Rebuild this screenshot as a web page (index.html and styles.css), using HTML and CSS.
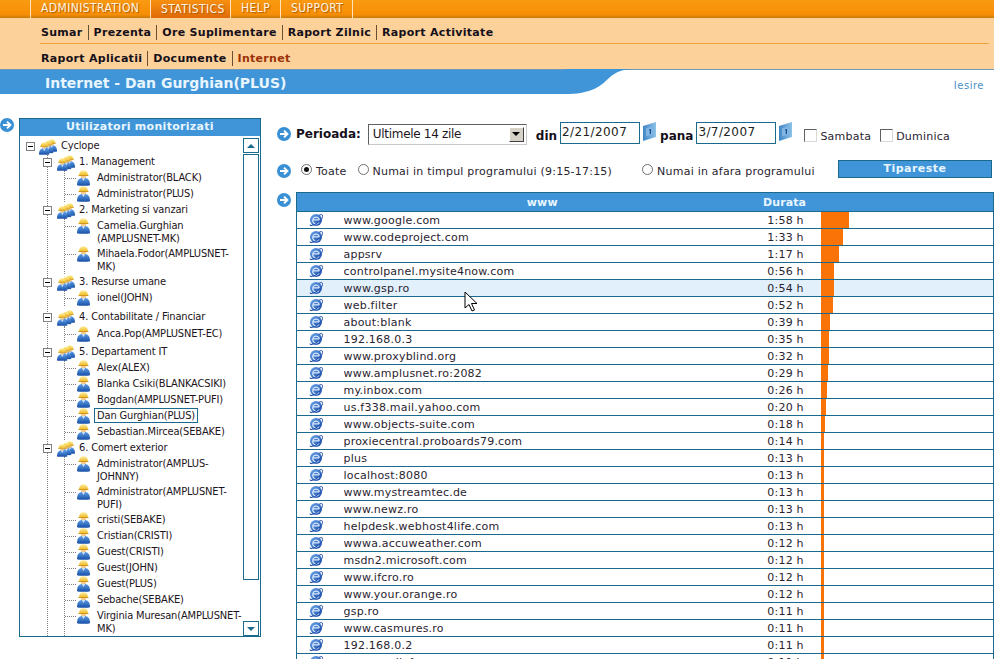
FILE: index.html
```html
<!DOCTYPE html>
<html lang="ro">
<head>
<meta charset="utf-8">
<title>Internet - Dan Gurghian(PLUS)</title>
<link rel="stylesheet" href="styles.css">
</head>
<body>
<svg class="defs" width="0" height="0" aria-hidden="true">
  <defs>
    <linearGradient id="ub" x1="0" y1="0" x2="0" y2="1"><stop offset="0" stop-color="#5f9fe6"/><stop offset="1" stop-color="#174ea6"/></linearGradient>
    <linearGradient id="uy" x1="0" y1="0" x2="0" y2="1"><stop offset="0" stop-color="#fff2a0"/><stop offset="1" stop-color="#f0bb28"/></linearGradient>
    <linearGradient id="ie" x1="0" y1="0" x2="1" y2="1"><stop offset="0" stop-color="#6aa6ea"/><stop offset="1" stop-color="#1a48a8"/></linearGradient>
    <linearGradient id="calg" x1="0" y1="0" x2="1" y2="0"><stop offset="0" stop-color="#3f86c4"/><stop offset="1" stop-color="#8ec2e8"/></linearGradient>
    <symbol id="user" viewBox="0 0 13 16">
      <path d="M0 15.300C0 10 2.200 7.800 6.500 7.800S13 10 13 15.300c-2 .7-11 .7-13 0z" fill="url(#ub)"/>
      <path d="M4.800 8h3.400L6.500 11z" fill="#cfe3fa"/>
      <path d="M3.800 5.500h5.400v1.700c-.8 1.300-4.600 1.300-5.400 0z" fill="#f3c98e"/>
      <path d="M2 5.200C2 2.100 4 .2 6.500.2S11 2.100 11 5.200z" fill="url(#uy)"/>
      <path d="M1.500 5.500h10" stroke="#cf9a1c" stroke-width="1"/>
    </symbol>
    <symbol id="arrow" viewBox="0 0 14 14">
      <circle cx="7" cy="7" r="7" fill="#3a90d4"/>
      <path d="M3 7h7M7 3.600 10.400 7 7 10.400" fill="none" stroke="#fff" stroke-width="2"/>
    </symbol>
    <symbol id="group" viewBox="0 0 18 17">
      <use href="#user" x="7.500" y="1" width="10.500" height="13"/>
      <use href="#user" x="4" y="2.500" width="10.500" height="13"/>
      <use href="#user" x="0" y="4" width="10.500" height="13"/>
    </symbol>
    <symbol id="ie-icon" viewBox="0 0 14 14">
      <circle cx="7" cy="7" r="6" fill="url(#ie)"/>
      <path d="M3.600 6.800h6.800M10 9.300A3.400 3.400 0 1 1 10.400 6.800" fill="none" stroke="#d7e8fb" stroke-width="1.200"/>
      <path d="M1.200 11.500C.3 13.500 4 12.800 8 10.200s6.500-6.400 5.500-8C13 1.300 11.500 1.500 10 2.300" fill="none" stroke="#1f4fa8" stroke-width="1"/>
    </symbol>
    <symbol id="cal" viewBox="0 0 14 20">
      <path d="M0 4 13 0v15L0 19z" fill="url(#calg)"/>
      <path d="M3 6.500 10.500 4v8L3 14.500z" fill="#7fb6e4"/>
      <path d="M6 7.500 8 7v5H6.800V8.300l-.8.200z" fill="#174f86"/>
    </symbol>
    <symbol id="minus" viewBox="0 0 9 9">
      <rect x=".5" y=".5" width="8" height="8" fill="#fff" stroke="#808080"/>
      <path d="M2 4.500h5" stroke="#000"/>
    </symbol>
  </defs>
</svg>

<header class="top">
  <nav class="tabs">
    <a class="tab">ADMINISTRATION</a>
    <a class="tab tab-active">STATISTICS</a>
    <a class="tab">HELP</a>
    <a class="tab">SUPPORT</a>
  </nav>
  <div class="subnav">
    <div class="subrow subrow-line">
      <a class="sub">Sumar</a><a class="sub">Prezenta</a><a class="sub">Ore Suplimentare</a><a class="sub">Raport Zilnic</a><a class="sub sub-last">Raport Activitate</a>
    </div>
    <div class="subrow">
      <a class="sub">Raport Aplicatii</a><a class="sub">Documente</a><a class="sub sub-last sub-current">Internet</a>
    </div>
  </div>
  <div class="banner">
    <h1 class="banner-title">Internet - Dan Gurghian(PLUS)</h1>
    <svg class="banner-curve" width="71" height="25" viewBox="0 0 71 25"><path d="M0 0H71C58 0 52 2 44 9 34 19 24 25 0 25z" fill="#3f95d7"/></svg>
    <a class="logout">Iesire</a>
  </div>
</header>

<main class="content">
  <aside class="side">
    <svg class="arrow side-arrow"><use href="#arrow"/></svg>
    <section class="panel">
      <h2 class="panel-title">Utilizatori monitorizati</h2>
      <div class="panel-body">
        <div class="tree">
          <div class="n n0"><svg class="minus"><use href="#minus"/></svg><svg class="group"><use href="#group"/></svg><span>Cyclope</span></div>
          <div class="branch b0">
            <div class="n n1"><svg class="minus"><use href="#minus"/></svg><svg class="group"><use href="#group"/></svg><span>1. Management</span></div>
            <div class="branch b1">
              <div class="n n2"><svg class="user"><use href="#user"/></svg><span>Administrator(BLACK)</span></div>
              <div class="n n2"><svg class="user"><use href="#user"/></svg><span>Administrator(PLUS)</span></div>
            </div>
            <div class="n n1"><svg class="minus"><use href="#minus"/></svg><svg class="group"><use href="#group"/></svg><span>2. Marketing si vanzari</span></div>
            <div class="branch b1">
              <div class="n n2"><svg class="user"><use href="#user"/></svg><span>Camelia.Gurghian<br>(AMPLUSNET-MK)</span></div>
              <div class="n n2"><svg class="user"><use href="#user"/></svg><span>Mihaela.Fodor(AMPLUSNET-<br>MK)</span></div>
            </div>
            <div class="n n1"><svg class="minus"><use href="#minus"/></svg><svg class="group"><use href="#group"/></svg><span>3. Resurse umane</span></div>
            <div class="branch b1">
              <div class="n n2"><svg class="user"><use href="#user"/></svg><span>ionel(JOHN)</span></div>
            </div>
            <div class="n n1 gap3"><svg class="minus"><use href="#minus"/></svg><svg class="group"><use href="#group"/></svg><span>4. Contabilitate / Financiar</span></div>
            <div class="branch b1 gap1">
              <div class="n n2"><svg class="user"><use href="#user"/></svg><span>Anca.Pop(AMPLUSNET-EC)</span></div>
            </div>
            <div class="n n1 gap2"><svg class="minus"><use href="#minus"/></svg><svg class="group"><use href="#group"/></svg><span>5. Departament IT</span></div>
            <div class="branch b1">
              <div class="n n2"><svg class="user"><use href="#user"/></svg><span>Alex(ALEX)</span></div>
              <div class="n n2"><svg class="user"><use href="#user"/></svg><span>Blanka Csiki(BLANKACSIKI)</span></div>
              <div class="n n2"><svg class="user"><use href="#user"/></svg><span>Bogdan(AMPLUSNET-PUFI)</span></div>
              <div class="n n2"><svg class="user"><use href="#user"/></svg><span class="selected">Dan Gurghian(PLUS)</span></div>
              <div class="n n2"><svg class="user"><use href="#user"/></svg><span>Sebastian.Mircea(SEBAKE)</span></div>
            </div>
            <div class="n n1"><svg class="minus"><use href="#minus"/></svg><svg class="group"><use href="#group"/></svg><span>6. Comert exterior</span></div>
            <div class="branch b1">
              <div class="n n2"><svg class="user"><use href="#user"/></svg><span>Administrator(AMPLUS-<br>JOHNNY)</span></div>
              <div class="n n2"><svg class="user"><use href="#user"/></svg><span>Administrator(AMPLUSNET-<br>PUFI)</span></div>
              <div class="n n2"><svg class="user"><use href="#user"/></svg><span>cristi(SEBAKE)</span></div>
              <div class="n n2"><svg class="user"><use href="#user"/></svg><span>Cristian(CRISTI)</span></div>
              <div class="n n2"><svg class="user"><use href="#user"/></svg><span>Guest(CRISTI)</span></div>
              <div class="n n2"><svg class="user"><use href="#user"/></svg><span>Guest(JOHN)</span></div>
              <div class="n n2"><svg class="user"><use href="#user"/></svg><span>Guest(PLUS)</span></div>
              <div class="n n2"><svg class="user"><use href="#user"/></svg><span>Sebache(SEBAKE)</span></div>
              <div class="n n2"><svg class="user"><use href="#user"/></svg><span>Virginia Muresan(AMPLUSNET-<br>MK)</span></div>
            </div>
            <div class="n n1"><svg class="minus"><use href="#minus"/></svg><svg class="group"><use href="#group"/></svg></div>
          </div>
        </div>
        <div class="scrollbar">
          <div class="sb-btn"><span class="tri tri-up"></span></div>
          <div class="sb-thumb"></div>
          <div class="sb-btn sb-btn-down"><span class="tri tri-down"></span></div>
        </div>
      </div>
    </section>
  </aside>

  <section class="report">
    <form class="filter filter-period">
      <svg class="arrow"><use href="#arrow"/></svg>
      <label class="strong lbl-period">Perioada:</label>
      <div class="select"><span class="select-value">Ultimele 14 zile</span><span class="select-btn"><span class="tri tri-down tri-dark"></span></span></div>
      <label class="strong lbl-din">din</label>
      <div class="date">2/21/2007</div>
      <svg class="cal"><use href="#cal"/></svg>
      <label class="strong lbl-pana">pana</label>
      <div class="date">3/7/2007</div>
      <svg class="cal"><use href="#cal"/></svg>
      <span class="check check-first"></span><span class="opt">Sambata</span>
      <span class="check check-second"></span><span class="opt">Duminica</span>
    </form>
    <form class="filter filter-time">
      <svg class="arrow"><use href="#arrow"/></svg>
      <span class="radio radio-on radio-a"></span><span class="opt opt-a">Toate</span>
      <span class="radio radio-b"></span><span class="opt opt-b">Numai in timpul programului (9:15-17:15)</span>
      <span class="radio radio-c"></span><span class="opt opt-c">Numai in afara programului</span>
      <span class="print">Tipareste</span>
    </form>
    <div class="table-row">
      <svg class="arrow table-arrow"><use href="#arrow"/></svg>
      <table class="grid">
        <colgroup><col class="c-ico"><col class="c-name"><col class="c-time"><col class="c-bar"></colgroup>
        <thead><tr><th colspan="2" class="th-www">www</th><th>Durata</th><th></th></tr></thead>
        <tbody>
          <tr><td><svg class="ie"><use href="#ie-icon"/></svg></td><td>www.google.com</td><td>1:58 h</td><td><div class="bar" style="width:28px"></div></td></tr>
          <tr><td><svg class="ie"><use href="#ie-icon"/></svg></td><td>www.codeproject.com</td><td>1:33 h</td><td><div class="bar" style="width:22px"></div></td></tr>
          <tr><td><svg class="ie"><use href="#ie-icon"/></svg></td><td>appsrv</td><td>1:17 h</td><td><div class="bar" style="width:18px"></div></td></tr>
          <tr><td><svg class="ie"><use href="#ie-icon"/></svg></td><td>controlpanel.mysite4now.com</td><td>0:56 h</td><td><div class="bar" style="width:13px"></div></td></tr>
          <tr class="hover"><td><svg class="ie"><use href="#ie-icon"/></svg></td><td>www.gsp.ro</td><td>0:54 h</td><td><div class="bar" style="width:13px"></div></td></tr>
          <tr><td><svg class="ie"><use href="#ie-icon"/></svg></td><td>web.filter</td><td>0:52 h</td><td><div class="bar" style="width:12px"></div></td></tr>
          <tr><td><svg class="ie"><use href="#ie-icon"/></svg></td><td>about:blank</td><td>0:39 h</td><td><div class="bar" style="width:9px"></div></td></tr>
          <tr><td><svg class="ie"><use href="#ie-icon"/></svg></td><td>192.168.0.3</td><td>0:35 h</td><td><div class="bar" style="width:8px"></div></td></tr>
          <tr><td><svg class="ie"><use href="#ie-icon"/></svg></td><td>www.proxyblind.org</td><td>0:32 h</td><td><div class="bar" style="width:8px"></div></td></tr>
          <tr><td><svg class="ie"><use href="#ie-icon"/></svg></td><td>www.amplusnet.ro:2082</td><td>0:29 h</td><td><div class="bar" style="width:7px"></div></td></tr>
          <tr><td><svg class="ie"><use href="#ie-icon"/></svg></td><td>my.inbox.com</td><td>0:26 h</td><td><div class="bar" style="width:6px"></div></td></tr>
          <tr><td><svg class="ie"><use href="#ie-icon"/></svg></td><td>us.f338.mail.yahoo.com</td><td>0:20 h</td><td><div class="bar" style="width:5px"></div></td></tr>
          <tr><td><svg class="ie"><use href="#ie-icon"/></svg></td><td>www.objects-suite.com</td><td>0:18 h</td><td><div class="bar" style="width:4px"></div></td></tr>
          <tr><td><svg class="ie"><use href="#ie-icon"/></svg></td><td>proxiecentral.proboards79.com</td><td>0:14 h</td><td><div class="bar" style="width:3px"></div></td></tr>
          <tr><td><svg class="ie"><use href="#ie-icon"/></svg></td><td>plus</td><td>0:13 h</td><td><div class="bar" style="width:3px"></div></td></tr>
          <tr><td><svg class="ie"><use href="#ie-icon"/></svg></td><td>localhost:8080</td><td>0:13 h</td><td><div class="bar" style="width:3px"></div></td></tr>
          <tr><td><svg class="ie"><use href="#ie-icon"/></svg></td><td>www.mystreamtec.de</td><td>0:13 h</td><td><div class="bar" style="width:3px"></div></td></tr>
          <tr><td><svg class="ie"><use href="#ie-icon"/></svg></td><td>www.newz.ro</td><td>0:13 h</td><td><div class="bar" style="width:3px"></div></td></tr>
          <tr><td><svg class="ie"><use href="#ie-icon"/></svg></td><td>helpdesk.webhost4life.com</td><td>0:13 h</td><td><div class="bar" style="width:3px"></div></td></tr>
          <tr><td><svg class="ie"><use href="#ie-icon"/></svg></td><td>wwwa.accuweather.com</td><td>0:12 h</td><td><div class="bar" style="width:3px"></div></td></tr>
          <tr><td><svg class="ie"><use href="#ie-icon"/></svg></td><td>msdn2.microsoft.com</td><td>0:12 h</td><td><div class="bar" style="width:3px"></div></td></tr>
          <tr><td><svg class="ie"><use href="#ie-icon"/></svg></td><td>www.ifcro.ro</td><td>0:12 h</td><td><div class="bar" style="width:3px"></div></td></tr>
          <tr><td><svg class="ie"><use href="#ie-icon"/></svg></td><td>www.your.orange.ro</td><td>0:12 h</td><td><div class="bar" style="width:3px"></div></td></tr>
          <tr><td><svg class="ie"><use href="#ie-icon"/></svg></td><td>gsp.ro</td><td>0:11 h</td><td><div class="bar" style="width:3px"></div></td></tr>
          <tr><td><svg class="ie"><use href="#ie-icon"/></svg></td><td>www.casmures.ro</td><td>0:11 h</td><td><div class="bar" style="width:3px"></div></td></tr>
          <tr><td><svg class="ie"><use href="#ie-icon"/></svg></td><td>192.168.0.2</td><td>0:11 h</td><td><div class="bar" style="width:3px"></div></td></tr>
          <tr><td><svg class="ie"><use href="#ie-icon"/></svg></td><td>www.mediafax.ro</td><td>0:11 h</td><td><div class="bar" style="width:3px"></div></td></tr>
        </tbody>
      </table>
    </div>
  </section>
</main>

<svg class="cursor" width="14" height="22" viewBox="0 0 14 22"><path d="M1 1v16l4-3.500 3 6.500 2.500-1-3-6.500h5.500z" fill="#fff" stroke="#000"/></svg>
</body>
</html>
```
FILE: styles.css
```css
* { box-sizing: border-box; }
html, body { height: 659px; overflow: hidden; }
body { margin: 0; background: #fff; color: #1c1420; font: 11px/13px "DejaVu Sans", Verdana, sans-serif; letter-spacing: .22px; position: relative; }
.defs { position: absolute; }
h1, h2 { margin: 0; }

.tabs { display: flex; height: 18px; padding-left: 30px; background: linear-gradient(#f99a12 0, #f78f06 80%, #c97a08 100%); }
.tab { border-left: 1px solid #fde3bd; padding: 2px 10px 0; color: #fff4e4; font: 12px/13px "DejaVu Sans Condensed", "Liberation Sans", sans-serif; letter-spacing: .4px; text-shadow: 1px 1px 1px #a85a00; }
.tab:nth-child(1) { width: 120px; }
.tab:nth-child(2) { width: 80px; padding-top: 3px; background: linear-gradient(#f79010, #e06a08); }
.tab:nth-child(3) { width: 50px; }
.tab:nth-child(4) { width: 73px; border-right: 1px solid #fde3bd; }

.subnav { height: 51px; background: #fdd19a; padding-left: 40px; }
.subrow { height: 25px; display: flex; align-items: center; font-weight: 700; color: #15101a; padding-left: 1px; letter-spacing: .3px; }
.subrow-line { border-bottom: 1px solid #f0a23c; height: 26px; margin-right: 5px; padding-top: 4px; }
.subrow:not(.subrow-line) { padding-top: 3px; }
.sub { padding-right: 5px; margin-right: 5px; border-right: 1px solid #6a5030; line-height: 15px; }
.sub-last { border-right: 0; }
.sub-current { color: #9a3208; }

.banner { height: 25px; display: flex; align-items: stretch; border-top: 1px solid #6a9ab8; }
.banner-title { width: 565px; background: #3f95d7; padding: 5px 0 0 45px; color: #e8f5ff; font-size: 14px; line-height: 16px; letter-spacing: 0; }
.banner-curve { flex: none; margin-top: -1px; }
.logout { margin-left: auto; padding: 9px 10px 0 0; color: #4a90c8; font-size: 10px; line-height: 13px; letter-spacing: .5px; }

.content { display: flex; padding-top: 24px; align-items: flex-start; }
.arrow { width: 14px; height: 14px; flex: none; display: block; }
.side { display: flex; width: 277px; flex: none; }
.side-arrow { margin-right: 5px; }
.panel { width: 242px; height: 519px; border: 1px solid #1a6a8e; display: flex; flex-direction: column; overflow: hidden; }
.panel-title { height: 17px; flex: none; background: #3f95d7; color: #e8f5ff; font-size: 11px; line-height: 16px; text-align: center; letter-spacing: .3px; }
.panel-body { flex: 1; min-height: 0; display: flex; padding: 1px 0 0; }
.tree { flex: 1; min-width: 0; font-family: "DejaVu Sans Condensed", "Liberation Sans", sans-serif; font-size: 11px; line-height: 13px; letter-spacing: -.15px; color: #1c1420; padding: 1px 0 0 6px; white-space: nowrap; overflow: hidden; }
.n { display: flex; padding: 1px 0; min-height: 16px; position: relative; }
.minus { width: 9px; height: 9px; flex: none; margin-top: 3px; margin-right: 5px; position: relative; z-index: 1; background: #fff; }
.n0 .minus { margin-right: 4px; }
.group { width: 18px; height: 17px; flex: none; margin: -1px 4px -2px 0; }
.user { width: 13px; height: 16px; flex: none; margin: -1px 7px -1px 0; }
.b0 { position: relative; padding-left: 17px; }
.b0::before { content: ""; position: absolute; left: 21px; top: 0; bottom: 0; border-left: 1px dotted #808080; }
.b1 { margin-left: 21px; border-left: 1px dotted #808080; }
.n1 { z-index: 1; }
.n2 { padding-left: 12px; }
.n2::before { content: ""; position: absolute; left: 0; top: 8px; width: 11px; border-top: 1px dotted #808080; }
.gap3 { margin-top: 3px; }
.gap2 { margin-top: 2px; }
.gap1 { margin-top: 1px; }
.selected { border: 1px solid #1a6a8e; padding: 0 2px; margin: -1px 0 -1px -3px; height: 15px; line-height: 13px; }

.scrollbar { width: 16px; flex: none; margin: 1px 1px 0 0; display: flex; flex-direction: column; gap: 1px; }
.sb-btn { height: 15px; flex: none; border: 1px solid #1a6a8e; display: flex; align-items: center; justify-content: center; }
.sb-btn-down { margin-top: auto; }
.sb-thumb { height: 426px; border: 1px solid #1a6a8e; }
.tri { width: 0; height: 0; border-left: 4px solid transparent; border-right: 4px solid transparent; }
.tri-up { border-bottom: 4px solid #1a6a8e; }
.tri-down { border-top: 4px solid #1a6a8e; }
.tri-dark { border-top-color: #000; }

.report { flex: 1; min-width: 0; padding-right: 2px; }
.filter { display: flex; align-items: center; color: #1c1420; }
.filter-period { height: 30px; padding-top: 2px; }
.filter-time { height: 21px; margin-top: 12px; }
.strong { font-size: 12px; font-weight: 700; color: #15101a; letter-spacing: 0; }
.lbl-period { margin-left: 5px; margin-right: 7px; }
.select { width: 159px; height: 21px; border: 1px solid #707070; border-color: #606060 #c8c8c8 #c8c8c8 #606060; display: flex; align-items: center; justify-content: space-between; font-size: 12px; letter-spacing: -.3px; padding: 0 2px 0 4px; }
.select-btn { width: 15px; height: 15px; background: #d6d2c8; border: 1px solid #404040; border-color: #fff #404040 #404040 #fff; display: flex; align-items: center; justify-content: center; }
.lbl-din { margin-left: 9px; margin-right: 3px; padding-top: 4px; }
.lbl-pana { margin-left: 3px; margin-right: 3px; padding-top: 4px; }
.date { width: 80px; height: 22px; border: 1px solid #1a6a8e; font-size: 12px; letter-spacing: .4px; line-height: 15px; padding: 2px 0 0 1px; color: #222; margin-top: -2px; }
.cal { width: 14px; height: 20px; flex: none; margin-left: 3px; margin-top: -5px; }
.check { width: 13px; height: 13px; border: 1px solid #606060; border-color: #606060 #d8d8d8 #d8d8d8 #606060; flex: none; margin-top: 2px; }
.check-first { margin-left: 11px; margin-right: 3px; }
.check-second { margin-left: 9px; margin-right: 3px; }
.opt { color: #2a2430; padding-top: 2px; }
.filter-period .opt { padding-top: 4px; }
.radio { width: 11px; height: 11px; border-radius: 50%; border: 1px solid #707070; flex: none; margin-top: -2px; position: relative; }
.radio-on::after { content: ""; position: absolute; left: 2px; top: 2px; width: 5px; height: 5px; border-radius: 50%; background: #111; }
.radio-a { margin-left: 10px; margin-right: 4px; }
.radio-b { margin-left: 11px; margin-right: 4px; }
.radio-c { margin-left: 30px; margin-right: 4px; }
.print { margin-left: auto; width: 154px; height: 18px; margin-top: -3px; background: #3f95d7; border: 1px solid #1a6a8e; color: #e8f5ff; font-weight: 700; letter-spacing: .45px; text-align: center; line-height: 16px; }

.table-row { display: flex; margin-top: 11px; }
.table-arrow { margin-top: 1px; margin-right: 5px; }
.grid { width: 697px; table-layout: fixed; border-collapse: collapse; border: 1px solid #1a6a8e; }
.c-ico { width: 47px; }
.c-name { width: 405px; }
.c-time { width: 72px; }
.c-bar { width: 173px; }
.grid th { height: 19px; background: #3f95d7; color: #e8f5ff; font-size: 11px; font-weight: 700; letter-spacing: .1px; padding: 0; text-align: center; }
.grid th.th-www { padding-left: 39px; }
.grid td { height: 17px; padding: 0; border-top: 1px solid #1a6a8e; line-height: 15px; color: #2a2430; overflow: hidden; white-space: nowrap; }
.grid td:first-child { padding-left: 12px; }
.grid td:nth-child(3) { text-align: center; padding-left: 2px; }
.grid td:nth-child(4) { vertical-align: top; }
.grid tr.hover td { background: #e1f0fb; }
.ie { display: block; width: 14px; height: 14px; }
.bar { height: 16px; background: #f97306; }

.cursor { position: absolute; left: 464px; top: 291px; }
```
